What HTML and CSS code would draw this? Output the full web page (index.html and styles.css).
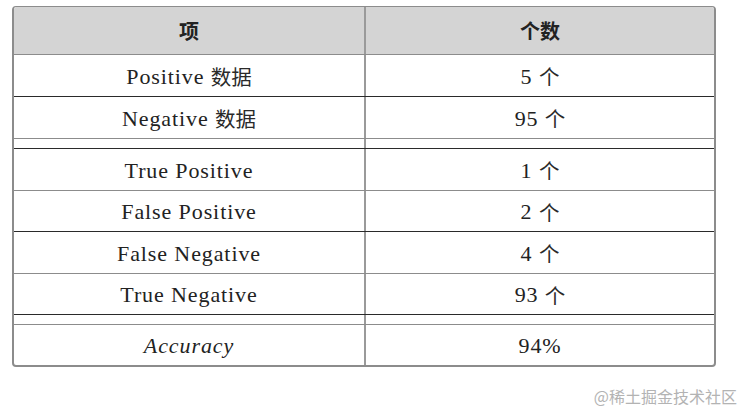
FILE: index.html
```html
<!DOCTYPE html>
<html>
<head>
<meta charset="utf-8">
<title>Table</title>
<link rel="stylesheet" href="styles.css">
</head>
<body>
<div class="table">
  <div class="row head"><div class="cell">项</div><div class="cell">个数</div></div>
  <div class="row r42 dark"><div class="cell">Positive <span class="zh">数据</span></div><div class="cell">5 <span class="zh">个</span></div></div>
  <div class="row r42 dark"><div class="cell">Negative <span class="zh">数据</span></div><div class="cell">95 <span class="zh">个</span></div></div>
  <div class="row spacer grey"><div class="cell"></div><div class="cell"></div></div>
  <div class="row r42 dark"><div class="cell">True Positive</div><div class="cell">1 <span class="zh">个</span></div></div>
  <div class="row r41 grey"><div class="cell">False Positive</div><div class="cell">2 <span class="zh">个</span></div></div>
  <div class="row r42 dark"><div class="cell">False Negative</div><div class="cell">4 <span class="zh">个</span></div></div>
  <div class="row r41 grey"><div class="cell">True Negative</div><div class="cell">93 <span class="zh">个</span></div></div>
  <div class="row spacer dark"><div class="cell"></div><div class="cell"></div></div>
  <div class="row r41 grey"><div class="cell"><em class="it">Accuracy</em></div><div class="cell">94%</div></div>
</div>
<div class="watermark">@稀土掘金技术社区</div>
</body>
</html>
```
FILE: styles.css
```css
html, body {
  margin: 0;
  padding: 0;
  background: #ffffff;
}
body {
  width: 751px;
  height: 419px;
  overflow: hidden;
  font-family: "Liberation Serif", "Noto Sans CJK SC", serif;
  color: #222222;
}
.table {
  margin: 6px 0 0 12px;
  width: 700px;
  border: 2px solid #8c8c8c;
  border-top-width: 1px;
  border-radius: 4px;
  overflow: hidden;
}
.row {
  display: grid;
  grid-template-columns: 350px 1fr;
}
.cell {
  display: flex;
  align-items: center;
  justify-content: center;
  white-space: pre;
  font-family: "Liberation Serif", "Noto Sans CJK SC", serif;
  font-size: 22px;
  letter-spacing: 0.9px;
  line-height: 1;
}
.zh {
  font-family: "Noto Sans CJK SC", sans-serif;
  font-size: 20.5px;
  font-weight: 400;
  letter-spacing: 0;
  color: #2a2a2a;
}
.cell + .cell {
  border-left: 2px solid #9a9a9a;
}
.head {
  height: 47px;
  background: #d4d4d4;
}
.head .cell {
  font-family: "Noto Sans CJK SC", sans-serif;
  font-weight: 700;
  font-size: 20px;
  letter-spacing: 0;
}
.r42 { height: 41px; }
.r41 { height: 40px; }
.spacer { height: 9px; }
.dark { border-top: 1px solid #2a2a2a; }
.grey { border-top: 1px solid #8c8c8c; }
.head + .dark { border-top-color: #8c8c8c; }
.head + .dark + .dark { border-top-color: #2a2a2a; }
.r42 .cell, .r41 .cell { padding-top: 2px; box-sizing: border-box; }
.it { font-style: italic; }
.watermark {
  margin-top: 17px;
  padding-right: 14px;
  text-align: right;
  font-family: "Noto Sans CJK SC", sans-serif;
  font-size: 16px;
  color: #b3b3b3;
  letter-spacing: 0;
}
```
